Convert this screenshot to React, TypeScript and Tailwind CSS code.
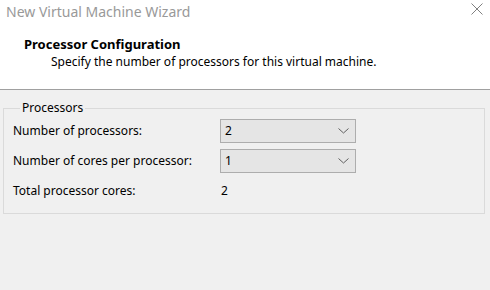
import React from 'react';

const font = { fontFamily: '"Noto Sans", "Open Sans", Arial, sans-serif' };

const Chevron: React.FC = () => (
  <svg width="11" height="6" viewBox="0 0 11 6" fill="none" className="text-[#606060]">
    <path d="M0.5 0.5 L5.5 5 L10.5 0.5" stroke="currentColor" strokeWidth="1" />
  </svg>
);

const Select: React.FC<{ value: string }> = ({ value }) => (
  <div className="flex h-[24px] w-[136px] items-center justify-between border border-[#adadad] bg-[#e5e5e5] pl-[4px] pr-[6px] text-[12px] text-black">
    <span>{value}</span>
    <Chevron />
  </div>
);

const App: React.FC = () => {
  return (
    <div className="flex h-[290px] w-[490px] flex-col overflow-hidden bg-[#f0f0f0]" style={font}>
      {/* Header */}
      <div className="h-[90px] border-b border-[#a0a0a0] bg-white">
        <div className="flex h-[22px] items-center justify-between pl-[6px] pr-[7px]">
          <span className="text-[14px] text-[#999999]">New Virtual Machine Wizard</span>
          <svg width="12" height="12" viewBox="0 0 12 12" className="mt-[-4px] text-[#808080]">
            <path d="M0.5 0.5 L11.5 11.5 M11.5 0.5 L0.5 11.5" stroke="currentColor" strokeWidth="1" />
          </svg>
        </div>
        <div className="pl-[24px] pt-[14px]">
          <div className="text-[13px] font-bold leading-[16px] text-black">Processor Configuration</div>
          <div className="pl-[27px] pt-[2px] text-[12px] leading-[16px] text-black">
            Specify the number of processors for this virtual machine.
          </div>
        </div>
      </div>

      {/* Body */}
      <fieldset className="ml-[3px] mt-[10px] w-[482px] border border-[#dadada] px-[9px] pb-[10px] pt-[3px]">
        <legend className="ml-[7px] px-[2px] text-[12px] leading-[16px] text-black">Processors</legend>
        <div className="grid grid-cols-[207px_136px] gap-y-[6px] text-[12px] text-black">
          <div className="flex h-[24px] items-center">Number of processors:</div>
          <Select value="2" />
          <div className="flex h-[24px] items-center">Number of cores per processor:</div>
          <Select value="1" />
          <div className="flex h-[24px] items-center">Total processor cores:</div>
          <div className="flex h-[24px] items-center pl-[1px]">2</div>
        </div>
      </fieldset>
    </div>
  );
};

export default App;
